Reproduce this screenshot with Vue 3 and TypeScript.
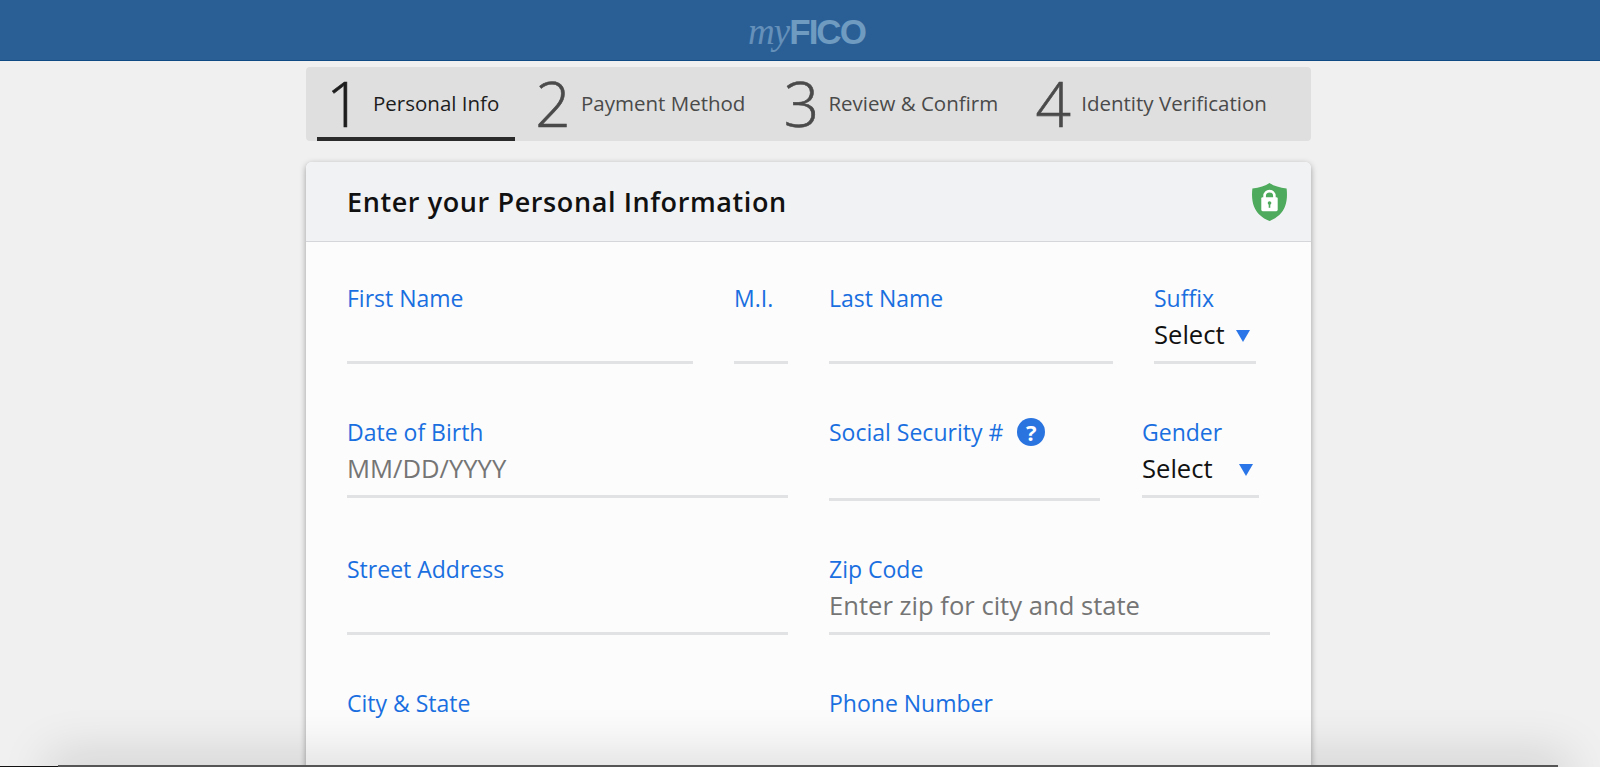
<script setup lang="ts">
interface Step { n: number; label: string; active?: boolean }
const steps: Step[] = [
  { n: 1, label: 'Personal Info', active: true },
  { n: 2, label: 'Payment Method' },
  { n: 3, label: 'Review & Confirm' },
  { n: 4, label: 'Identity Verification' },
]
</script>

<template>
  <div class="page">
    <header class="topbar">
      <div class="logo"><span class="my">my</span><span class="fico">FICO</span></div>
    </header>

    <main class="column">
      <nav class="steps">
        <div v-for="s in steps" :key="s.n" class="step" :class="[`step-${s.n}`, { active: s.active }]">
          <span class="num">{{ s.n }}</span>
          <span class="lbl">{{ s.label }}</span>
        </div>
      </nav>

      <section class="card">
        <div class="card-head">
          <h1>Enter your Personal Information</h1>
          <svg class="shield" viewBox="0 0 35 38" width="35" height="38">
            <path d="M17.5 0 C21.5 3 27.5 4.8 34.6 5.4 C35.4 12 35 18 33 23.5 C30.6 30 25 35 17.5 38 C10 35 4.4 30 2 23.5 C0 18 -0.4 12 0.4 5.4 C7.5 4.8 13.5 3 17.5 0 Z" fill="#4eaa5c" />
            <path d="M12.6 15 V13 a4.9 4.9 0 0 1 9.8 0 V15" fill="none" stroke="#fff" stroke-width="2.6" />
            <rect x="9.3" y="14.2" width="16.4" height="14" rx="1.4" fill="#fff" />
            <circle cx="17.5" cy="20" r="1.8" fill="#4eaa5c" />
            <rect x="16.7" y="20.4" width="1.6" height="4.4" fill="#4eaa5c" />
          </svg>
        </div>

        <div class="form">
          <div class="row row-1">
            <div class="field f-first"><label>First Name</label><div class="val"></div></div>
            <div class="field f-mi"><label>M.I.</label><div class="val"></div></div>
            <div class="field f-last"><label>Last Name</label><div class="val"></div></div>
            <div class="field f-suffix">
              <label>Suffix</label>
              <div class="val select"><span>Select</span><i class="tri tri-suffix"></i></div>
            </div>
          </div>

          <div class="row">
            <div class="field f-dob"><label>Date of Birth</label><div class="val ph">MM/DD/YYYY</div></div>
            <div class="field f-ssn">
              <label>Social Security # <span class="help">?</span></label>
              <div class="val"></div>
            </div>
            <div class="field f-gender">
              <label>Gender</label>
              <div class="val select"><span>Select</span><i class="tri tri-gender"></i></div>
            </div>
          </div>

          <div class="row">
            <div class="field f-half"><label>Street Address</label><div class="val"></div></div>
            <div class="field f-half2"><label>Zip Code</label><div class="val ph">Enter zip for city and state</div></div>
          </div>

          <div class="row">
            <div class="field f-half"><label>City &amp; State</label></div>
            <div class="field f-half2"><label>Phone Number</label></div>
          </div>
        </div>
      </section>
    </main>

    <div class="bottom-shade"></div>
    <div class="bottom-edge"></div>
  </div>
</template>

<style>
html, body { margin: 0; padding: 0; background: #f0f0f0; }
</style>

<style scoped>
.page {
  position: relative;
  height: 767px;
  overflow: hidden;
  background: #f0f0f0;
  font-family: "Open Sans", "Noto Sans", sans-serif;
}
.topbar {
  height: 60px;
  background: #2a5f96;
  border-bottom: 1px solid #0f4a85;
  display: flex;
  justify-content: center;
  align-items: flex-start;
}
.logo {
  display: flex;
  align-items: baseline;
  color: #6f9bc1;
  height: 60px;
  line-height: 60px;
  margin-left: 13px;
  margin-top: 2px;
}
.my {
  font-family: "Liberation Serif", serif;
  font-style: italic;
  font-size: 37px;
  letter-spacing: -1px;
  color: #6590b9;
}
.fico {
  font-family: "Liberation Sans", sans-serif;
  font-weight: 700;
  font-size: 35px;
  letter-spacing: -2px;
}
.column {
  width: 1005px;
  margin: 6px 0 0 306px;
}
.steps {
  height: 74px;
  background: #dfdfdf;
  border-radius: 4px;
  display: flex;
  align-items: stretch;
  padding-left: 11px;
  box-sizing: border-box;
  color: #4a4a4a;
}
.step {
  display: flex;
  align-items: center;
  height: 74px;
  box-sizing: border-box;
  padding-bottom: 2px;
}
.step.active {
  color: #1d1d1d;
  border-bottom: 4px solid #2b2b2b;
  padding-top: 2px;
  padding-bottom: 0;
  width: 198px;
}
.num {
  font-size: 62px;
  font-weight: 300;
  line-height: 62px;
  -webkit-text-stroke: 0.6px currentColor;
  text-align: center;
}
.lbl { font-size: 20.5px; }
.step-1 .num { width: 36px; margin-left: 9px; margin-right: 11px; }
.step-2 { margin-left: 20px; }
.step-2 .num { width: 36px; margin-right: 10px; }
.step-3 { margin-left: 38px; }
.step-3 .num { width: 36px; margin-right: 9px; }
.step-4 { margin-left: 37px; }
.step-4 .num { width: 36px; margin-right: 10px; }
.card {
  margin-top: 21px;
  background: #fcfcfc;
  border-radius: 6px 6px 0 0;
  box-shadow: 0 2px 6px rgba(0, 0, 0, 0.35);
  height: 700px;
}
.card-head {
  height: 80px;
  box-sizing: border-box;
  background: #f1f2f4;
  border-bottom: 1px solid #d4d6d9;
  border-radius: 6px 6px 0 0;
  padding: 0 24px 0 41px;
  display: flex;
  align-items: center;
  justify-content: space-between;
}
h1 {
  margin: 0;
  font-size: 27px;
  font-weight: 600;
  color: #111;
  letter-spacing: 0.6px;
}
.form { padding: 0 41px; }
.row { display: flex; align-items: flex-start; padding-top: 50px; }
.row-1 { padding-top: 38px; }
.field { flex: none; }
label {
  display: flex;
  align-items: center;
  height: 36px;
  font-size: 23px;
  color: #1a6fe0;
  white-space: pre;
}
.val {
  height: 45px;
  line-height: 37px;
  border-bottom: 3px solid #e1e2e3;
  font-size: 25.6px;
  color: #111;
}
.ph { color: #757575; }
.select { display: block; position: relative; }
.tri {
  width: 0;
  height: 0;
  border-left: 7px solid transparent;
  border-right: 7px solid transparent;
  border-top: 12px solid #2a76e8;
  position: absolute;
  top: 14px;
}
.tri-suffix { left: 82px; }
.tri-gender { left: 97px; }
.f-first { width: 346px; margin-right: 41px; }
.f-mi { width: 54px; margin-right: 41px; }
.f-last { width: 284px; margin-right: 41px; }
.f-suffix { width: 102px; }
.f-dob { width: 441px; margin-right: 41px; }
.f-ssn { width: 271px; margin-right: 42px; }
.f-ssn .val { height: 48px; }
.f-gender { width: 117px; }
.f-half { width: 441px; margin-right: 41px; }
.f-half2 { width: 441px; }
.help {
  width: 28px;
  height: 28px;
  border-radius: 50%;
  background: #2a74e0;
  color: #fff;
  font-weight: 700;
  font-size: 22px;
  display: inline-flex;
  align-items: center;
  justify-content: center;
  margin-left: 8px;
}
.bottom-shade {
  position: absolute;
  left: 58px;
  width: 1500px;
  bottom: -20px;
  height: 22px;
  background: #555;
  box-shadow: 0 0 50px 10px rgba(0, 0, 0, 0.14);
  pointer-events: none;
}
.bottom-edge {
  position: absolute;
  left: 0;
  width: 58px;
  bottom: 0;
  height: 1px;
  background: #111;
}
</style>
